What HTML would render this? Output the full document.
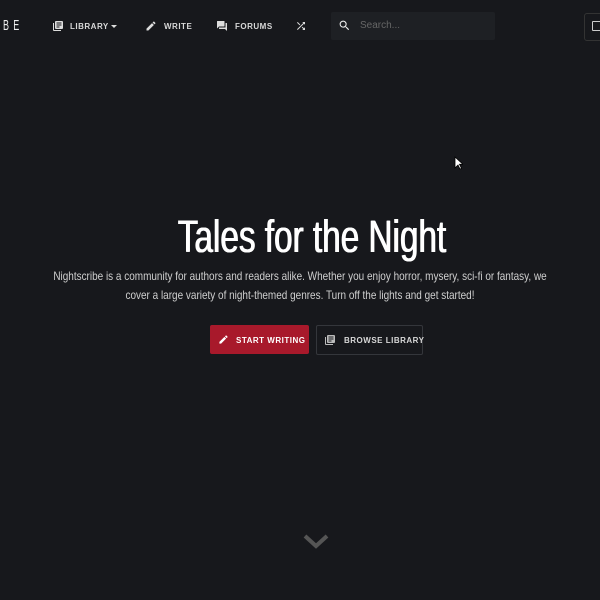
<!DOCTYPE html>
<html><head><style>
body{margin:0;width:600px;height:600px;background:#17181c;font-family:"Liberation Sans",sans-serif;overflow:hidden;position:relative;color:#ddd}
.a{position:absolute}
.nav{font-size:8px;font-weight:bold;letter-spacing:.5px;color:#d8d8d8}
.t{position:absolute;left:0;width:600px;text-align:center;white-space:nowrap}
</style></head><body>
<div class="a" style="left:3px;top:17px;font-size:15px;letter-spacing:7px;color:#eee;transform:scaleX(.6);transform-origin:left">BE</div>
<svg class="a" style="left:52px;top:20px" width="12" height="12" viewBox="0 0 24 24" fill="#ddd"><path d="M4 6H2v14c0 1.1.9 2 2 2h14v-2H4V6zm16-4H8c-1.1 0-2 .9-2 2v12c0 1.1.9 2 2 2h12c1.1 0 2-.9 2-2V4c0-1.1-.9-2-2-2zm-1 9H9V9h10v2zm-4 4H9v-2h6v2zm4-8H9V5h10v2z"/></svg>
<div class="a nav" style="left:70px;top:22px">LIBRARY</div>
<div class="a" style="left:111px;top:25px;border:3px solid transparent;border-top:3px solid #ddd"></div>
<svg class="a" style="left:145px;top:20px" width="12" height="12" viewBox="0 0 24 24" fill="#ddd"><path d="M3 17.25V21h3.75L17.81 9.94l-3.75-3.75L3 17.25zM20.71 7.04a1 1 0 000-1.41l-2.34-2.34a1 1 0 00-1.41 0l-1.83 1.83 3.75 3.75 1.83-1.83z"/></svg>
<div class="a nav" style="left:164px;top:22px">WRITE</div>
<svg class="a" style="left:216px;top:20px" width="12" height="12" viewBox="0 0 24 24" fill="#ddd"><path d="M21 6h-2v9H6v2c0 .55.45 1 1 1h11l4 4V7c0-.55-.45-1-1-1zm-4 6V3c0-.55-.45-1-1-1H3c-.55 0-1 .45-1 1v14l4-4h10c.55 0 1-.45 1-1z"/></svg>
<div class="a nav" style="left:235px;top:22px">FORUMS</div>
<svg class="a" style="left:295px;top:20px" width="12" height="12" viewBox="0 0 24 24" fill="#ddd"><path d="M10.59 9.17L5.41 4 4 5.41l5.17 5.17 1.42-1.41zM14.5 4l2.04 2.04L4 18.59 5.41 20 17.96 7.46 20 9.5V4h-5.5zm.33 9.41l-1.41 1.41 3.13 3.13L14.5 20H20v-5.5l-2.04 2.04-3.13-3.13z"/></svg>
<div class="a" style="left:331px;top:12px;width:164px;height:28px;background:#1e2024;border-radius:2px"></div>
<svg class="a" style="left:338px;top:19px" width="13" height="13" viewBox="0 0 24 24" fill="#eee"><path d="M15.5 14h-.79l-.28-.27A6.47 6.47 0 0016 9.5 6.5 6.5 0 109.5 16c1.61 0 3.09-.59 4.23-1.57l.27.28v.79l5 4.99L20.49 19l-4.99-5zm-6 0C7.01 14 5 11.99 5 9.5S7.01 5 9.5 5 14 7.01 14 9.5 11.99 14 9.5 14z"/></svg>
<div class="a" style="left:360px;top:20px;font-size:10px;color:#666">Search...</div>
<div class="a" style="left:584px;top:13px;width:30px;height:26px;border:1px solid #333;border-radius:3px"></div>
<div class="a" style="left:592px;top:21px;width:8px;height:8px;border:1.5px solid #ccc;border-radius:1px"></div>
<div class="t" style="top:212px;font-size:45px;line-height:50px;color:#fff;transform:translateX(12px) scaleX(.74);transform-origin:300px 0;text-shadow:0.6px 0 0 #fff,-0.6px 0 0 #fff">Tales for the Night</div>
<div class="t" style="top:267px;font-size:11.6px;line-height:19px;color:#cfcfcf;transform:scaleX(.86)">Nightscribe is a community for authors and readers alike. Whether you enjoy horror, mysery, sci-fi or fantasy, we<br>cover a large variety of night-themed genres. Turn off the lights and get started!</div>
<div class="a" style="left:210px;top:325px;width:99px;height:29px;background:#a8192b;border-radius:2px"></div>
<svg class="a" style="left:218px;top:334px" width="11" height="11" viewBox="0 0 24 24" fill="#fff"><path d="M3 17.25V21h3.75L17.81 9.94l-3.75-3.75L3 17.25zM20.71 7.04a1 1 0 000-1.41l-2.34-2.34a1 1 0 00-1.41 0l-1.83 1.83 3.75 3.75 1.83-1.83z"/></svg>
<div class="a nav" style="left:236px;top:336px;color:#fff">START WRITING</div>
<div class="a" style="left:316px;top:325px;width:105px;height:28px;border:1px solid #34363b;border-radius:2px"></div>
<svg class="a" style="left:324px;top:334px" width="12" height="12" viewBox="0 0 24 24" fill="#bbb"><path d="M4 6H2v14c0 1.1.9 2 2 2h14v-2H4V6zm16-4H8c-1.1 0-2 .9-2 2v12c0 1.1.9 2 2 2h12c1.1 0 2-.9 2-2V4c0-1.1-.9-2-2-2zm-1 9H9V9h10v2zm-4 4H9v-2h6v2zm4-8H9V5h10v2z"/></svg>
<div class="a nav" style="left:344px;top:336px">BROWSE LIBRARY</div>
<svg class="a" style="left:302px;top:532px" width="28" height="18" viewBox="0 0 28 18"><path d="M3 4l11 10 11-10" stroke="#555" stroke-width="4" fill="none"/></svg>
<svg class="a" style="left:454px;top:156px" width="9" height="14" viewBox="0 0 9 14"><path d="M1 1v11l3-3 2 4 1.5-.7-2-4H9z" fill="#fff" stroke="#000" stroke-width=".8"/></svg>
</body></html>
